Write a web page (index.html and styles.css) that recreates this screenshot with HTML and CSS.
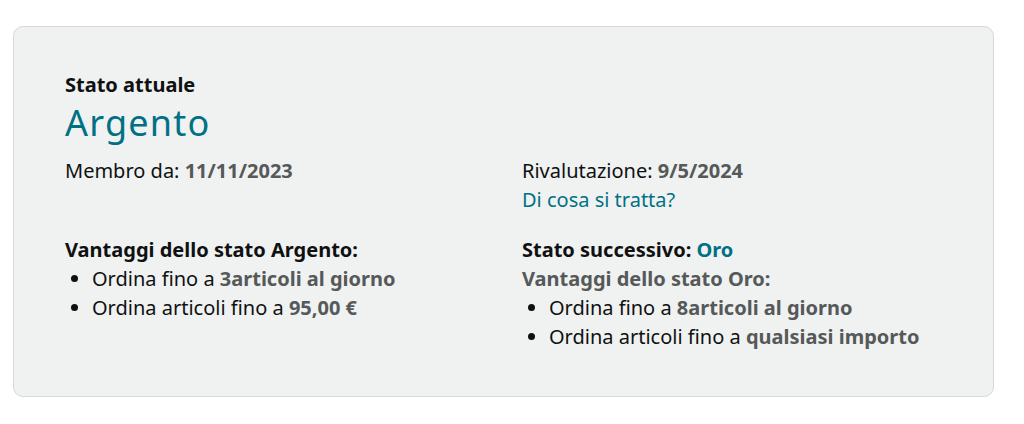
FILE: index.html
```html
<!DOCTYPE html>
<html>
<head>
    <title>Stato attuale</title>
    <link rel="stylesheet" href="styles.css">
</head>
<body>
    <div class="status-card">
        <div class="current">
            <div class="label heading">Stato attuale</div>
            <div class="tier">Argento</div>
        </div>
        <div class="details">
            <div class="cell">
                <div>Membro da: <span class="value">11/11/2023</span></div>
            </div>
            <div class="cell">
                <div>Rivalutazione: <span class="value">9/5/2024</span></div>
                <a class="link" href="#">Di cosa si tratta?</a>
            </div>
            <div class="cell benefits">
                <div class="label">Vantaggi dello stato Argento:</div>
                <ul>
                    <li>Ordina fino a <span class="value">3articoli al giorno</span></li>
                    <li>Ordina articoli fino a <span class="value">95,00 €</span></li>
                </ul>
            </div>
            <div class="cell benefits">
                <div class="label">Stato successivo: <span class="next">Oro</span></div>
                <div class="label muted">Vantaggi dello stato Oro:</div>
                <ul>
                    <li>Ordina fino a <span class="value">8articoli al giorno</span></li>
                    <li>Ordina articoli fino a <span class="value">qualsiasi importo</span></li>
                </ul>
            </div>
        </div>
    </div>
</body>
</html>
```

FILE: styles.css
```css
body {
    margin: 0;
    padding: 26px 0 0 13px;
    background-color: #fff;
    font-family: "Noto Sans", Arial, sans-serif;
    font-size: 20px;
    line-height: 29px;
    color: #0f1111;
}

.status-card {
    width: 928px;
    padding: 45px 0 45px 51px;
    background-color: #f0f1f1;
    border: 1px solid #d5d9d9;
    border-radius: 10px;
}

.label {
    font-weight: bold;
}

.heading {
    line-height: 25px;
}

.tier {
    font-size: 36px;
    line-height: 52px;
    letter-spacing: 1.2px;
    margin-bottom: 7px;
    color: #007185;
}

.details {
    display: grid;
    grid-template-columns: 457px 1fr;
    row-gap: 21px;
}

.value {
    font-weight: bold;
    color: #565959;
}

.link {
    display: block;
    color: #007185;
    text-decoration: none;
}

.next {
    color: #007185;
}

.muted {
    color: #565959;
}

ul {
    margin: 0;
    padding-left: 27px;
}
```
